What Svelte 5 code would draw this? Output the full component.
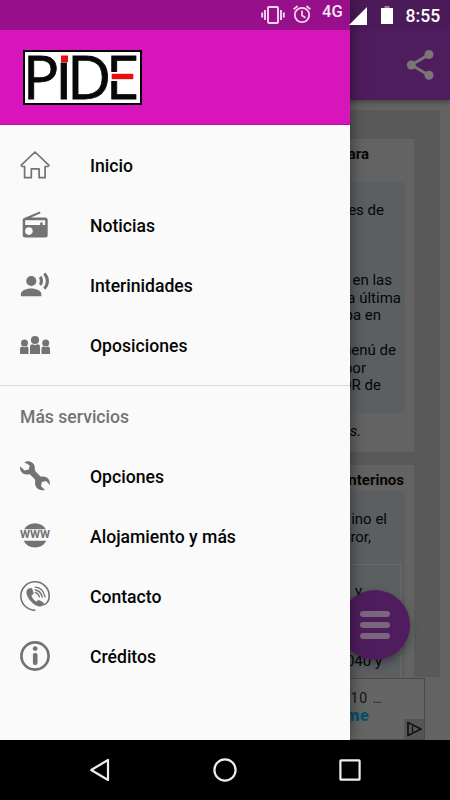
<script>
  const mainItems = [
    { label: "Inicio", icon: "home" },
    { label: "Noticias", icon: "radio" },
    { label: "Interinidades", icon: "voice" },
    { label: "Oposiciones", icon: "people" },
  ];

  const serviceItems = [
    { label: "Opciones", icon: "wrench" },
    { label: "Alojamiento y más", icon: "www" },
    { label: "Contacto", icon: "phone" },
    { label: "Créditos", icon: "info" },
  ];

  // each line runs up to `end`, the left part stays under the drawer
  const firstLines = [
    { text: "es de", end: 384 },
    { text: "", end: 0 },
    { text: "", end: 0 },
    { text: "", end: 0 },
    { text: "en las", end: 392 },
    { text: "a última", end: 401 },
    { text: "pa en", end: 381 },
    { text: "", end: 0 },
    { text: "menú de", end: 396 },
    { text: "por", end: 366 },
    { text: "OR de", end: 381 },
  ];

  const secondLines = [
    { text: "ino el", end: 387 },
    { text: "ror,", end: 371 },
  ];

  const nestedLines = [
    { text: "y", end: 361 },
    { text: "", end: 0 },
    { text: "", end: 0 },
    { text: "", end: 0 },
    { text: "040 y", end: 381 },
  ];
</script>

{#snippet lines(list)}
  {#each list as line}
    <div class="line" style="width: {line.end}px">{line.text}</div>
  {/each}
{/snippet}

{#snippet menu(items)}
  <ul class="menu">
    {#each items as item}
      <li class="menu-item">
        <svg class="menu-icon" viewBox="0 0 30 30">
          {#if item.icon === "home"}
            <path
              d="M1 15.300 15 2l14 13.300-1.100 1.200h-2.800v11.200h-6v-8.800h-7.800v8.800H4.600V16.500H2.100z"
              fill="none"
              stroke="currentColor"
              stroke-width="1.7"
              stroke-linejoin="round"
            />
          {:else if item.icon === "radio"}
            <path
              fill-rule="evenodd"
              d="M4.2 8 19.8 1.5l.8 1.8L11 7.5h14.2a2.5 2.5 0 0 1 2.5 2.5v15a2.5 2.5 0 0 1-2.5 2.5h-20A2.5 2.5 0 0 1 2.700 25V10q0-1.500 1.500-2zM5.200 10.200v4.900h15v-2.500h2.500v2.500h2.500v-4.900zM8.900 17.300a3.800 3.800 0 1 0 0 7.600 3.800 3.800 0 0 0 0-7.600z"
            />
          {:else if item.icon === "voice"}
            <circle cx="11.3" cy="11" r="5.1" />
            <path d="M.9 26.2v-2.6c0-3.4 6.8-5.2 10.2-5.2s10.2 1.8 10.2 5.2v2.6z" />
            <path
              d="m19 7.9 2.1-2.1c2.6 2.8 2.6 7.2 0 10.1L19 13.7c1.1-1.7 1.1-4.1 0-5.8zM23.2 4.7l2.1-2.1c4.9 5 4.9 12.4 0 17.1l-2.1-2.1c3.5-3.9 3.5-9.2 0-12.9z"
            />
          {:else if item.icon === "people"}
            <circle cx="4.5" cy="12.900" r="3.500" />
            <circle cx="15" cy="10" r="4.100" />
            <circle cx="25.700" cy="12.900" r="3.500" />
            <path
              d="M0 24v-5.200q0-2.300 2.200-2.300 2.300 1.400 4.600 0 1.700 0 1.700 2.300V24zM10 24v-7.200q0-2.600 2.300-2.600 2.700 1.500 5.400 0 2.300 0 2.300 2.600V24zM21.500 24v-5.200q0-2.300 1.800-2.300 2.300 1.400 4.600 0 2.100 0 2.100 2.300V24z"
            />
          {:else if item.icon === "wrench"}
            <path
              d="M4.4 1.2C8.2-.9 15 .5 14.9 7.8c0 1.4.2 2.2 1 3l3.9 4c.7.7 1.5 1 2.6.8 5.2-.5 7.9 3.5 7.5 8.3l-3.9-3.8-4.1.8-1 4.2 4 3.800C19.200 30.600 14 26.400 15.200 20.300c.2-1 0-1.700-.7-2.400l-3.700-3.700c-.8-.8-1.500-1-2.600-.8C2.700 14.300-.5 10.200.1 5.300l4.500 4.200 4.100-1 1-4z"
            />
          {:else if item.icon === "www"}
            <path d="M4.100 8.200a13 13 0 0 1 21.800 0zM3.600 19.800h22.800a13 13 0 0 1-22.800 0z" />
            <text x="0" y="17.400" textLength="30" lengthAdjust="spacingAndGlyphs">WWW</text>
          {:else if item.icon === "phone"}
            <path
              d="M15.400 29.200A14.200 14.200 0 1 1 29.200 15c0 4.700-2.500 8.600-6.200 8.800"
              fill="none"
              stroke="currentColor"
              stroke-width="1.600"
            />
            <path
              d="m8 8.100 2.700-.8q1.100-.1 1.400.9l1.100 3.600q.2 1-.7 1.600l-1.400.9c.9 2.900 2.400 5.100 5.200 6.600l1.300-1.200q.8-.6 1.700-.2l3.400 1.700q1 .6.600 1.700l-.8 1.700c-3.400 1.700-8.300-.6-11.900-4.800C7.200 15.900 5.400 10.700 8 8.100z"
              stroke="currentColor"
              stroke-width=".6"
            />
            <path
              d="M15.300 6.200q7.500.5 9.800 9.600M15.200 9q5.600.7 7 7M15.200 11.700q3.400.7 4.200 4.200"
              fill="none"
              stroke="currentColor"
              stroke-width="1.300"
              stroke-linecap="round"
            />
          {:else}
            <circle cx="15" cy="15" r="13.600" fill="none" stroke="currentColor" stroke-width="2.700" />
            <circle cx="15.200" cy="7.600" r="2.400" />
            <rect x="12.900" y="12" width="4.600" height="12" rx="2.100" />
          {/if}
        </svg>
        <span class="menu-label">{item.label}</span>
      </li>
    {/each}
  </ul>
{/snippet}

<div class="screen">
  <div class="page">
    <header class="app-bar">
      <svg class="share" viewBox="0 0 28 32">
        <path d="M23 5.500 5.300 16 23 26.300" fill="none" stroke="currentColor" stroke-width="2.800" />
        <circle cx="23" cy="5.500" r="4.500" />
        <circle cx="5.300" cy="16" r="4.500" />
        <circle cx="23" cy="26.300" r="4.500" />
      </svg>
    </header>

    <main class="content">
      <article class="card first">
        <h2 class="card-title"><span class="line" style="width: 369px">ara</span></h2>
        <div class="box">{@render lines(firstLines)}</div>
        <p class="signature"><span class="line" style="width: 361px">s.</span></p>
      </article>
      <article class="card second">
        <h2 class="card-title"><span class="line" style="width: 404px">nterinos</span></h2>
        <div class="box">
          {@render lines(secondLines)}
          <div class="nested">{@render lines(nestedLines)}</div>
        </div>
      </article>
    </main>

    <aside class="ad">
      <div class="ad-line">E 10 …</div>
      <div class="ad-brand">me</div>
      <svg class="ad-choices" viewBox="0 0 20 20">
        <path d="M4 3.500v13L17 10z" fill="none" stroke="#111" stroke-width="1.700" stroke-linejoin="round" />
        <path d="M8.500 7.200v5.600" stroke="#111" stroke-width="1.400" />
      </svg>
    </aside>
  </div>

  <div class="fab">
    <span></span>
    <span></span>
    <span></span>
  </div>

  <nav class="drawer">
    <div class="drawer-header">
      <svg class="logo" viewBox="0 0 119 55" aria-label="PiDE">
        <rect x="1" y="1" width="117" height="53" fill="#fff" stroke="#000" stroke-width="2" />
        <text y="49.200"
          ><tspan x="-.3">P</tspan><tspan class="small-i" x="32.300">ı</tspan><tspan x="44">D</tspan><tspan
            x="82.800">E</tspan
          ></text
        >
        <rect x="38" y="5.500" width="7" height="6.700" fill="#e60f0f" />
        <rect x="87" y="22" width="28" height="9" fill="#fff" />
        <rect x="88.700" y="23.800" width="21.600" height="5.400" fill="#e60f0f" />
      </svg>
    </div>
    {@render menu(mainItems)}
    <div class="services">
      <h3 class="subheader">Más servicios</h3>
      {@render menu(serviceItems)}
    </div>
  </nav>

  <div class="status-bar">
    <svg class="vibrate" viewBox="0 0 24 18">
      <rect x="7" y="1" width="10" height="16" rx="1" fill="none" stroke="currentColor" stroke-width="1.900" />
      <path d="M4 4v10M1.200 6.500v5M20 4v10M22.800 6.500v5" stroke="currentColor" stroke-width="1.900" />
    </svg>
    <svg class="alarm" viewBox="0 0 20 20">
      <circle cx="10" cy="11" r="7.200" fill="none" stroke="currentColor" stroke-width="1.800" />
      <path
        d="M10 6.500v5l3.500 2.200M1.600 5.300 5.500 2M18.400 5.300 14.500 2"
        fill="none"
        stroke="currentColor"
        stroke-width="1.700"
      />
    </svg>
    <span class="network">4G</span>
    <svg class="signal" viewBox="0 0 18 18"><path d="M0 18 18 0v18z" /></svg>
    <svg class="battery" viewBox="0 0 12 18">
      <path d="M3.500 0h5v2h-5z" opacity=".45" />
      <path d="M0 2h12v16H0z" />
    </svg>
    <span class="clock">8:55</span>
  </div>

  <footer class="nav-bar">
    <svg viewBox="0 0 24 24"><path d="M3.200 12 20 2v20z" /></svg>
    <svg viewBox="0 0 24 24"><circle cx="12" cy="12" r="10.600" /></svg>
    <svg viewBox="0 0 24 24"><rect x="2.400" y="2.400" width="19.200" height="19.200" rx=".6" /></svg>
  </footer>
</div>

<style>
  :global(body) {
    margin: 0;
  }

  .screen {
    position: relative;
    display: flex;
    flex-direction: column;
    width: 450px;
    height: 800px;
    overflow: hidden;
    background-color: #636363;
    font-family: Roboto, sans-serif;
  }

  svg {
    display: block;
    fill: currentColor;
  }

  .page {
    height: 740px;
    overflow: hidden;
    color: #060606;
    font-size: 15px;
  }

  .app-bar {
    box-sizing: border-box;
    height: 100px;
    padding: 19px 15px 0 0;
    display: flex;
    justify-content: flex-end;
    border-top: 30px solid #4a1b58;
    background-color: #4f1c5e;
    color: #777;
    box-shadow: 0 2px 5px rgba(0, 0, 0, 0.35);
  }

  .share {
    width: 28px;
    height: 32px;
    margin-right: 1px;
  }

  .content {
    box-sizing: border-box;
    width: 440px;
    height: 567px;
    margin-top: 10px;
    padding-top: 29px;
    overflow: hidden;
    background-color: #595959;
  }

  .card {
    box-sizing: border-box;
    width: 414px;
    margin-bottom: 13px;
    background-color: #636363;
    overflow: hidden;
  }

  .first {
    height: 313px;
  }

  .second {
    height: 260px;
  }

  .card-title {
    margin: 0;
    font-size: 15px;
    font-weight: 700;
    line-height: 30px;
  }

  .line {
    display: block;
    height: 17.5px;
    line-height: 17.5px;
    text-align: right;
    white-space: nowrap;
  }

  .card-title .line {
    height: 26px;
    line-height: 30px;
  }

  .box {
    box-sizing: border-box;
    width: 405px;
    padding-top: 20px;
    border-radius: 4px;
    background-color: #5c5f62;
  }

  .first .box {
    height: 231px;
    margin-top: 17px;
  }

  .second .box {
    height: 260px;
  }

  .nested {
    box-sizing: border-box;
    width: 401px;
    height: 180px;
    margin-top: 18px;
    padding-top: 18px;
    border: 1px solid #66696b;
  }

  .signature {
    margin: 10px 0 0;
    font-style: italic;
  }

  .ad {
    position: relative;
    box-sizing: border-box;
    width: 425px;
    height: 62px;
    margin-top: 1px;
    padding-top: 11px;
    border: 1px solid #484848;
    border-left: none;
    background-color: #656565;
  }

  .ad-line {
    width: 383px;
    font-size: 14px;
    line-height: 17px;
    letter-spacing: 1px;
    text-align: right;
    color: #151515;
  }

  .ad-brand {
    width: 369px;
    font-family: "Open Sans", sans-serif;
    font-size: 15px;
    font-weight: 800;
    line-height: 16px;
    text-align: right;
    color: #0d506b;
  }

  .ad-choices {
    position: absolute;
    right: 0;
    bottom: 0;
    width: 20px;
    height: 20px;
    background-color: #555;
  }

  .fab {
    position: absolute;
    left: 340px;
    top: 590px;
    width: 70px;
    height: 70px;
    display: flex;
    flex-direction: column;
    align-items: center;
    justify-content: center;
    gap: 5px;
    border-radius: 50%;
    background-color: #4f1c5e;
    box-shadow: 0 4px 8px rgba(0, 0, 0, 0.35);
  }

  .fab span {
    width: 30px;
    height: 6px;
    border-radius: 3px;
    background-color: #79677d;
  }

  .drawer {
    position: absolute;
    left: 0;
    top: 0;
    width: 350px;
    height: 740px;
    background-color: #fafafa;
    box-shadow: 0 0 14px rgba(0, 0, 0, 0.5);
  }

  .drawer-header {
    box-sizing: border-box;
    height: 125px;
    padding: 20px 0 0 23px;
    border-top: 30px solid #970f8a;
    border-bottom: 1px solid #b3149b;
    background-color: #d815ba;
  }

  .logo {
    width: 119px;
    height: 55px;
    overflow: visible;
  }

  .logo text {
    font-family: "Open Sans", sans-serif;
    font-size: 61px;
    fill: #080808;
    stroke: #080808;
    stroke-width: 0.8px;
  }

  .logo .small-i {
    font-size: 68px;
  }

  .menu {
    margin: 0;
    padding: 10px 0;
    list-style: none;
  }

  .menu-item {
    display: flex;
    align-items: center;
    gap: 40px;
    height: 60px;
    padding-left: 20px;
  }

  .menu-icon {
    width: 30px;
    height: 30px;
    overflow: visible;
    color: #737373;
  }

  .menu-icon text {
    font-size: 10.5px;
    font-weight: 700;
  }

  .menu-label {
    padding-top: 1px;
    font-size: 17.6px;
    font-weight: 500;
    color: #050505;
  }

  .services {
    border-top: 1px solid #dadada;
  }

  .subheader {
    margin: 0;
    padding: 6px 20px 0;
    font-size: 17.6px;
    font-weight: 500;
    line-height: 50px;
    color: #737373;
  }

  .services .menu {
    padding-top: 4px;
  }

  .status-bar {
    position: absolute;
    left: 0;
    top: 0;
    box-sizing: border-box;
    width: 450px;
    height: 30px;
    display: flex;
    align-items: flex-start;
    padding-left: 261px;
    color: #fff;
  }

  .vibrate {
    width: 24px;
    height: 18px;
    margin-top: 6px;
    color: #f3d8f0;
  }

  .alarm {
    width: 20px;
    height: 20px;
    margin: 4px 0 0 6.5px;
    color: #f3d8f0;
  }

  .network {
    width: 28px;
    margin-left: 10.5px;
    font-size: 16.5px;
    font-weight: 500;
    line-height: 23px;
    color: #fbe9f8;
  }

  .signal {
    width: 18px;
    height: 18px;
    margin-top: 7px;
    margin-left: -1px;
  }

  .battery {
    width: 12px;
    height: 18px;
    margin: 6px 0 0 14px;
  }

  .clock {
    margin-left: 12.5px;
    font-size: 17.6px;
    font-weight: 500;
    line-height: 32px;
  }

  .nav-bar {
    position: relative;
    box-sizing: border-box;
    height: 60px;
    display: flex;
    align-items: center;
    justify-content: space-between;
    padding: 0 88px;
    background-color: #000;
  }

  .nav-bar svg {
    width: 24px;
    height: 24px;
    fill: none;
    stroke: #eee;
    stroke-width: 2.2;
    stroke-linejoin: round;
  }
</style>
